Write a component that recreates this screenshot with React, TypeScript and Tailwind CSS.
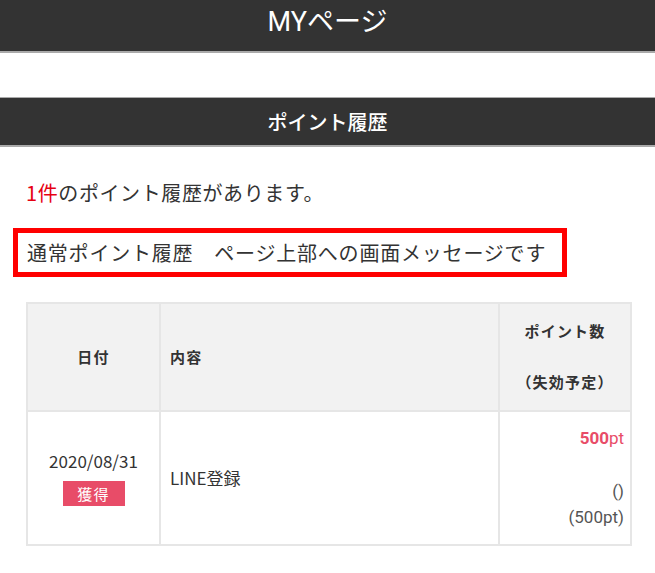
export default function App() {
  const font = { fontFamily: '"Noto Sans CJK JP", "Noto Sans", sans-serif' };
  return (
    <div className="min-h-screen bg-white text-[#333]" style={font}>
      {/* ページヘッダー */}
      <header className="h-[53px] bg-[#333] border-b-2 border-[#aaa] flex items-center justify-center">
        <h1 className="text-white text-[27px] leading-none font-['Roboto','Noto_Sans_CJK_JP',sans-serif] pb-[6px]">MYページ</h1>
      </header>

      <div className="h-[44px]" />

      {/* セクション見出し */}
      <div className="h-[50px] bg-[#333] border-t border-b-2 border-[#aaa] flex items-center justify-center">
        <h2 className="text-white text-[20px] leading-none font-medium">ポイント履歴</h2>
      </div>

      <div className="px-[26px]">
        <p className="mt-[31px] text-[20px] leading-[30px] tracking-[0.03em] text-[#333]">
          <span className="text-[#e60012]">1件</span>のポイント履歴があります。
        </p>

        <div className="mt-[20px] -ml-[13px] w-[554px] h-[49px] border-[5px] border-[#ff0000] flex items-center pl-[9px]">
          <p className="text-[20px] leading-none tracking-[0.04em] text-[#333] whitespace-nowrap">
            通常ポイント履歴　ページ上部への画面メッセージです
          </p>
        </div>

        {/* 履歴テーブル */}
        <table className="mt-[25px] w-[604px] border-collapse table-fixed">
          <colgroup>
            <col className="w-[133px]" />
            <col className="w-[339px]" />
            <col className="w-[132px]" />
          </colgroup>
          <thead>
            <tr className="h-[108px] bg-[#f2f2f2]">
              <th className="border-2 border-[#e6e6e6] text-[15px] font-bold tracking-[0.08em] text-center">日付</th>
              <th className="border-2 border-[#e6e6e6] text-[15px] font-bold tracking-[0.08em] text-left pl-[9px]">内容</th>
              <th className="border-2 border-[#e6e6e6] text-[15px] font-bold tracking-[0.08em] text-center leading-[51px] pb-[2px]">
                ポイント数<br />（失効予定）
              </th>
            </tr>
          </thead>
          <tbody>
            <tr className="h-[134px]">
              <td className="border-2 border-[#e6e6e6] text-center align-middle">
                <div className="text-[17px] leading-[22px]">2020/08/31</div>
                <div className="mx-auto mt-[9px] w-[62px] h-[25px] bg-[#e84c68] text-white text-[15px] leading-[25px] tracking-[0.08em]">
                  獲得
                </div>
              </td>
              <td className="border-2 border-[#e6e6e6] pl-[9px] text-[17px] align-middle">LINE登録</td>
              <td className="border-2 border-[#e6e6e6] text-right pr-[6px] align-top pt-[14px] font-['Roboto','Noto_Sans_CJK_JP',sans-serif] text-[17px]">
                <div className="leading-[24px] text-[#e84c68]">
                  <span className="font-bold">500</span>pt
                </div>
                <div className="leading-[26px] mt-[28px] text-[#555]">()</div>
                <div className="leading-[26px] text-[#555]">(500pt)</div>
              </td>
            </tr>
          </tbody>
        </table>
      </div>
    </div>
  );
}
